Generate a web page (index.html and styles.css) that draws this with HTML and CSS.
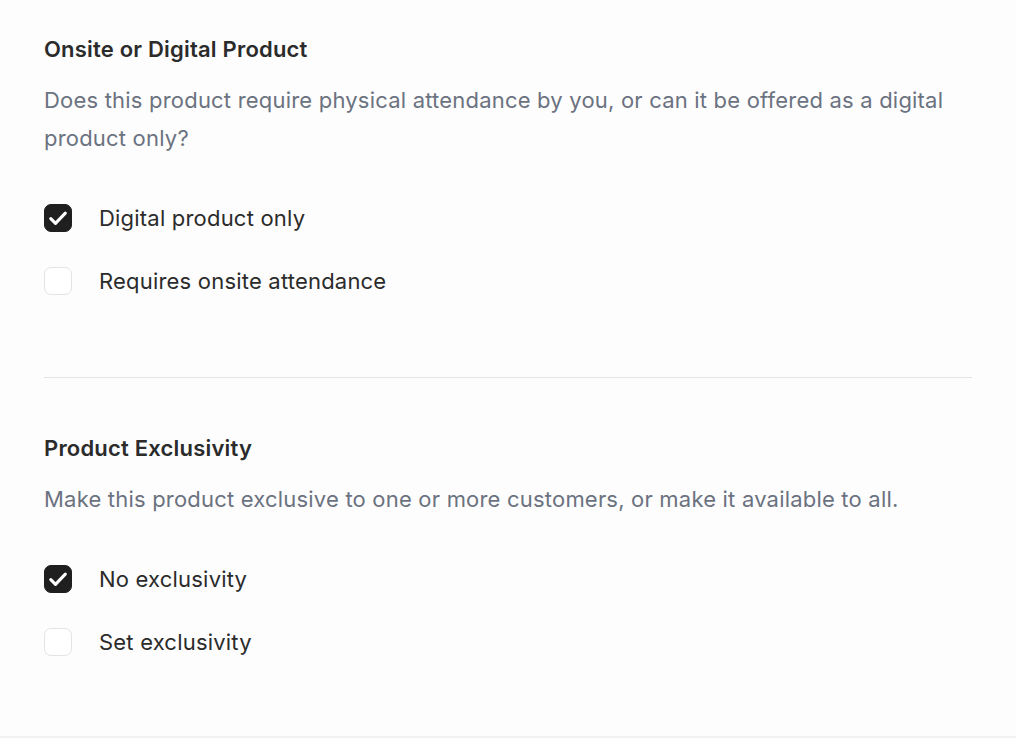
FILE: index.html
```html
<!DOCTYPE html>
<html lang="en">
<head>
<meta charset="utf-8">
<title>Product settings</title>
<link rel="stylesheet" href="styles.css">
</head>
<body>
<main class="page">
  <section class="section">
    <h2 class="title">Onsite or Digital Product</h2>
    <p class="desc">Does this product require physical attendance by you, or can it be offered as a digital product only?</p>
    <div class="options">
      <label class="option">
        <span class="box checked"><svg viewBox="0 0 28 28" width="28" height="28"><path d="M6.8 14.6l4.7 4.7L21.3 9.2" fill="none" stroke="#fff" stroke-width="3.1" stroke-linecap="round" stroke-linejoin="round"/></svg></span>
        <span class="label">Digital product only</span>
      </label>
      <label class="option">
        <span class="box"></span>
        <span class="label">Requires onsite attendance</span>
      </label>
    </div>
  </section>
  <hr class="divider">
  <section class="section second">
    <h2 class="title">Product Exclusivity</h2>
    <p class="desc">Make this product exclusive to one or more customers, or make it available to all.</p>
    <div class="options">
      <label class="option">
        <span class="box checked"><svg viewBox="0 0 28 28" width="28" height="28"><path d="M6.8 14.6l4.7 4.7L21.3 9.2" fill="none" stroke="#fff" stroke-width="3.1" stroke-linecap="round" stroke-linejoin="round"/></svg></span>
        <span class="label">No exclusivity</span>
      </label>
      <label class="option">
        <span class="box"></span>
        <span class="label">Set exclusivity</span>
      </label>
    </div>
  </section>
  <div class="bottom"></div>
</main>
</body>
</html>
```
FILE: styles.css
```css
* { box-sizing: border-box; }
html, body { margin: 0; padding: 0; background: #fdfdfd; }
body {
  font-family: Inter, "Noto Sans", sans-serif;
  color: #2b2b2b;
  letter-spacing: 0.2px;
}
.page {
  width: 1016px;
  min-height: 738px;
  display: flex;
  flex-direction: column;
}
.section {
  padding: 35px 44px 0 44px;
}
.section.second {
  padding-top: 56px;
}
.title {
  margin: 0;
  font-size: 22px;
  line-height: 28px;
  font-weight: 600;
  color: #2b2b2b;
}
.desc {
  margin: 18px 0 0 0;
  font-size: 22px;
  line-height: 38px;
  color: #6b7280;
  max-width: 928px;
}
.options {
  margin-top: 47px;
  display: flex;
  flex-direction: column;
  gap: 35px;
}
.option {
  display: flex;
  align-items: center;
  gap: 27px;
  height: 28px;
}
.box {
  width: 28px;
  height: 28px;
  border-radius: 7px;
  border: 1px solid #e3e3e8;
  background: #fff;
  display: flex;
  align-items: center;
  justify-content: center;
  flex: none;
}
.box.checked {
  background: #1f1f1f;
  border-color: #1f1f1f;
}
.box svg {
  display: block;
  flex: none;
}
.label {
  font-size: 22px;
  line-height: 28px;
  color: #2b2b2b;
}
.divider {
  margin: 82px 44px 0 44px;
  border: 0;
  border-top: 1px solid #e5e5e5;
  height: 0;
}
.bottom {
  margin-top: auto;
  height: 2px;
  background: #f2f2f2;
}
```
